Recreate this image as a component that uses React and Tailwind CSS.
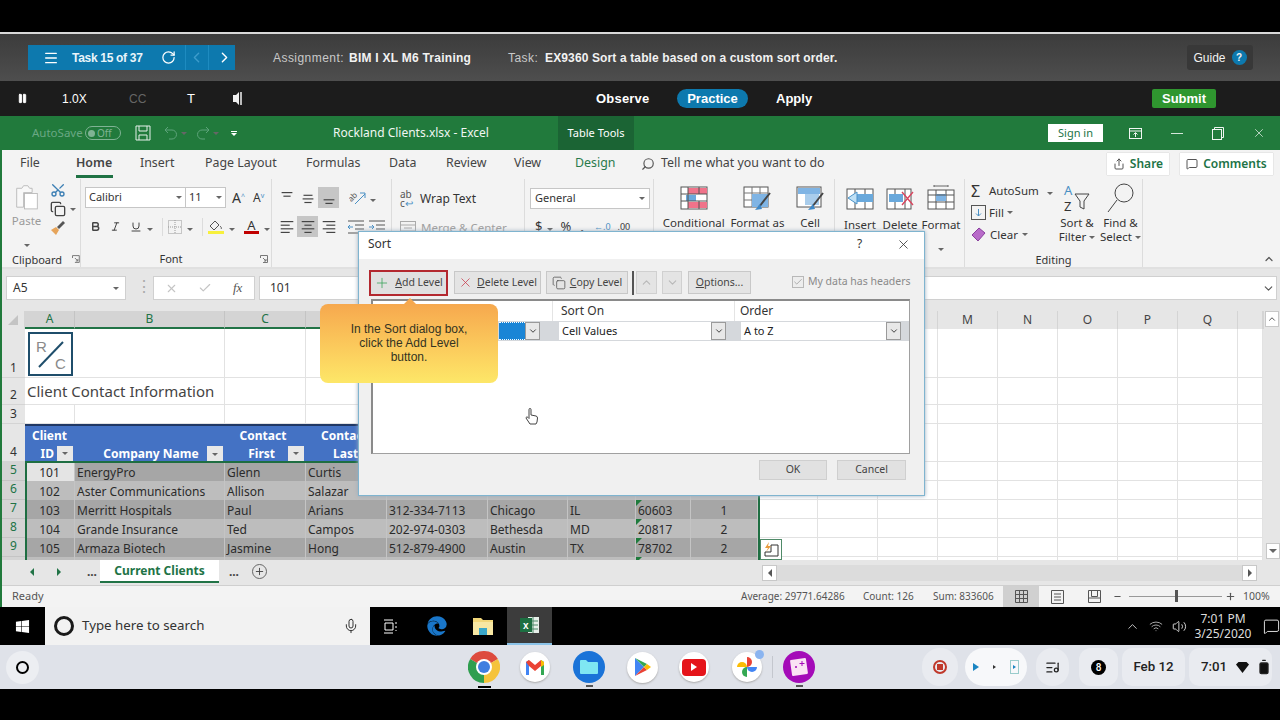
import React from "react";
import { FaEdge, FaWindows } from "react-icons/fa";
import { ChevronLeft, ChevronRight, Menu, RotateCw, Pause, ChevronUp, Search, X, Plus, Minus, Copy, Check, ChevronDown, Mic, Volume2, Wifi, ListMusic, BatteryFull, MessageSquare, Share, Scissors, Bold, Italic, Underline } from "lucide-react";

const Caret = () => <span className="inline-block w-0 h-0 shrink-0 border-x-[3px] border-x-transparent border-t-[3px] border-t-[#666666]" />;

const Lines = ({ kind, sel }) => {
  const lines = {
    top: [[4, 16, 4], [6, 14, 8]],
    mid: [[5, 15, 7], [4, 16, 11], [6, 14, 15]],
    bot: [[4, 16, 12], [6, 14, 16]],
    l: [[3, 17, 4], [3, 13, 8], [3, 17, 12], [3, 13, 16]],
    c: [[3, 17, 4], [6, 14, 8], [3, 17, 12], [6, 14, 16]],
    r: [[3, 17, 4], [7, 17, 8], [3, 17, 12], [7, 17, 16]],
  }[kind];
  return (
    <span className={sel ? "w-[21px] h-[21px] flex items-center justify-center bg-[#c6c6c6]" : "w-[21px] h-[21px] flex items-center justify-center"}>
      <svg width="18" height="18" viewBox="0 0 20 20" stroke="#444444" strokeWidth="1.3">
        {lines.map((l, i) => <line key={i} x1={l[0]} x2={l[1]} y1={l[2]} y2={l[2]} />)}
      </svg>
    </span>
  );
};

const TableIcon = ({ kind }) => (
  <svg width="30" height="26" viewBox="0 0 30 26" fill="none">
    {kind === "cond" && <><rect x="2" y="2" width="26" height="22" fill="#fff" stroke="#555" /><rect x="9" y="3" width="19" height="6" fill="#f0738a" /><rect x="9" y="17" width="19" height="6" fill="#f0738a" /><rect x="7" y="10" width="10" height="6" fill="#6aa9dc" /><path d="M9 2v22M20 2v7M2 9h26M2 16h26M20 16v8" stroke="#555" /></>}
    {kind === "table" && <><rect x="2" y="2" width="24" height="20" fill="#fff" stroke="#555" /><path d="M10 2v20M18 2v20M2 8h24M2 15h24" stroke="#777" /><rect x="10" y="9" width="16" height="13" fill="#7fb4e4" /><path d="M28 8 L17 22" stroke="#444" strokeWidth="2" /><path d="M18 19 L13 25 L20 24Z" fill="#3f89c8" /></>}
    {kind === "cell" && <><rect x="2" y="2" width="24" height="20" fill="#fff" stroke="#555" /><rect x="3" y="3" width="22" height="6" fill="#7fb4e4" /><rect x="10" y="9" width="14" height="11" fill="#a9cdec" /><path d="M28 8 L17 22" stroke="#444" strokeWidth="2" /><path d="M18 19 L13 25 L20 24Z" fill="#3f89c8" /></>}
    {kind === "insert" && <><rect x="2" y="4" width="26" height="20" fill="#fff" stroke="#555" /><path d="M10 4v20M20 4v20" stroke="#555" /><rect x="8" y="9" width="20" height="8" fill="#6aa9dc" /><path d="M12 7 L3 13 L12 19Z" fill="#bfe0f5" stroke="#4c93c9" /></>}
    {kind === "delete" && <><rect x="2" y="4" width="24" height="20" fill="#fff" stroke="#555" /><path d="M10 4v20M20 4v20" stroke="#555" /><rect x="4" y="9" width="14" height="8" fill="#6aa9dc" /><path d="M17 7 L28 20M28 7 L17 20" stroke="#d9455f" strokeWidth="1.4" /></>}
    {kind === "format" && <><path d="M8 1h14M8 0v2M22 0v2" stroke="#666" /><rect x="2" y="5" width="26" height="19" fill="#fff" stroke="#555" /><path d="M10 5v19M20 5v19" stroke="#555" /><rect x="10" y="9" width="10" height="7" fill="#7fb4e4" /><path d="M2 10h26M2 17h26" stroke="#555" /></>}
  </svg>
);

const cols = ["", "A", "B", "C", "D", "E", "F", "G", "H", "I", "J", "K", "L", "M", "N", "O", "P", "Q", ""];
const data = [
  [5, "101", "EnergyPro", "Glenn", "Curtis", "", "", "", "", ""],
  [6, "102", "Aster Communications", "Allison", "Salazar", "", "", "", "", ""],
  [7, "103", "Merritt Hospitals", "Paul", "Arians", "312-334-7113", "Chicago", "IL", "60603", "1"],
  [8, "104", "Grande Insurance", "Ted", "Campos", "202-974-0303", "Bethesda", "MD", "20817", "2"],
  [9, "105", "Armaza Biotech", "Jasmine", "Hong", "512-879-4900", "Austin", "TX", "78702", "2"],
  [10, "", "", "", "", "", "", "", "", ""],
];

const Blank = ({ n }) => Array.from({ length: n }).map((_, i) => <div key={i} className="bg-white border-r border-b border-[#e2e2e2]" />);

const RowHead = ({ children, active }) => (
  <div className={active ? "bg-[#d4d4d4] border-b border-[#c4c4c4] text-[#217346] flex items-start justify-center text-[12px] leading-[16px]" : "bg-[#e6e6e6] border-b border-[#d4d4d4] text-[#333333] flex items-end justify-center text-[12px] leading-[18px]"}>{children}</div>
);

const Filter = () => (
  <span className="w-[16px] h-[16px] shrink-0 bg-[#e8e8e8] flex items-center justify-center"><Caret /></span>
);

const Shelf = ({ children, cls }) => <span className={"flex items-center justify-center " + cls}>{children}</span>;

export default function App() {
  return (
    <div className="relative w-[1280px] h-[720px] overflow-hidden bg-black font-['Noto_Sans',sans-serif] text-[#333333]">
      <div className="h-[32px] bg-black" />
      <div className="h-[2px] bg-[#d9d9d9]" />

      {/* task bar */}
      <div className="h-[47px] flex items-center bg-gradient-to-b from-[#3c3c3c] to-[#4e4e4e] pl-[28px] font-['Liberation_Sans',sans-serif] text-[12px] text-white">
        <div className="w-[207px] h-[25px] bg-[#0d79ae] flex items-center shrink-0">
          <Menu size={16} className="ml-[15px] w-[16px]" />
          <span className="ml-[13px] w-[81px] font-bold text-[#e8f4fa] tracking-[-0.3px]">Task 15 of 37</span>
          <RotateCw size={15} className="ml-[8px]" />
          <span className="ml-[9px] w-px h-[25px] bg-[#1e8bc0]" />
          <ChevronLeft size={17} className="ml-[2px] text-[#3d9ccb]" />
          <span className="ml-[3px] w-px h-[25px] bg-[#1e8bc0]" />
          <ChevronRight size={17} className="ml-[7px]" />
        </div>
        <span className="ml-[38px] w-[76px] text-[#c9c9c9] tracking-[0.45px]">Assignment:</span>
        <span className="w-[159px] font-bold text-[#f2f2f2] tracking-[0.25px]">BIM I XL M6 Training</span>
        <span className="w-[37px] text-[#c9c9c9] tracking-[0.45px]">Task:</span>
        <span className="w-[642px] font-bold text-[#f2f2f2] tracking-[0.13px]">EX9360 Sort a table based on a custom sort order.</span>
        <div className="w-[66px] h-[25px] bg-[#383838] rounded-[3px] flex items-center justify-center gap-[6px] text-[#f2f2f2]">
          <span>Guide</span>
          <span className="w-[15px] h-[15px] rounded-full bg-[#0d79ae] flex items-center justify-center text-[10px] font-bold">?</span>
        </div>
      </div>

      {/* mode bar */}
      <div className="h-[35px] flex items-center bg-[#1c1c1c] font-['Liberation_Sans',sans-serif] text-white text-[12px]">
        <span className="w-[62px] pl-[17px]"><Pause size={11} fill="white" /></span>
        <span className="w-[67px]">1.0X</span>
        <span className="w-[58px] text-[#666666]">CC</span>
        <span className="w-[46px] text-[13px]">T</span>
        <span className="w-[363px] flex"><svg width="10" height="15" viewBox="0 0 10 15"><path d="M0 4h3l3-3v13l-3-3H0z" fill="#f0f0f0" /><path d="M8 1v13" stroke="#f0f0f0" strokeWidth="1.5" /></svg></span>
        <span className="w-[81px] text-[13px] font-bold tracking-[0.2px]">Observe</span>
        <span className="w-[71px] h-[19px] rounded-full bg-[#0d79ae] flex items-center justify-center text-[13px] font-bold">Practice</span>
        <span className="w-[28px]" />
        <span className="w-[376px] text-[13px] font-bold">Apply</span>
        <span className="w-[64px] h-[19px] bg-[#2f962f] rounded-[2px] flex items-center justify-center text-[13px] font-bold">Submit</span>
      </div>

      {/* excel title */}
      <div className="h-[34px] flex items-center bg-[#217a3c] text-white text-[12px]">
        <span className="w-[32px]" />
        <span className="w-[53px] text-[11.5px] text-[#6aa884]">AutoSave</span>
        <span className="w-[36px] h-[14px] rounded-full border border-[#7fb394] flex items-center px-[2px] gap-[2px] text-[10px] text-[#7fb394]"><span className="w-[7px] h-[7px] rounded-full bg-[#7fb394]" />Off</span>
        <span className="w-[14px]" />
        <svg width="16" height="16" viewBox="0 0 16 16" fill="none" stroke="#e6f0ea" strokeWidth="1"><path d="M1 1h14v14H1zM4 1v5h8V1M4 15v-5h8v5" /></svg>
        <span className="ml-[12px] flex items-center gap-[2px] text-[#5da37a]">
          <svg width="16" height="16" viewBox="0 0 16 16" fill="none" stroke="currentColor"><path d="M5 2L2 5l3 3M2 5h7a4 4 0 010 9H6" /></svg><Caret />
          <svg className="ml-[6px]" width="16" height="16" viewBox="0 0 16 16" fill="none" stroke="currentColor"><path d="M11 2l3 3-3 3M14 5H7a4 4 0 000 9h3" /></svg><Caret />
        </span>
        <span className="ml-[12px] flex flex-col items-center gap-[1px]"><span className="w-[6px] h-px bg-white" /><span className="w-0 h-0 border-x-[3px] border-x-transparent border-t-[3px] border-t-white" /></span>
        <span className="ml-[96px] w-[225px] text-[12px] text-[#f0f6f2]">Rockland Clients.xlsx - Excel</span>
        <span className="w-[76px] h-[34px] bg-[#1b6434] text-[11px] flex items-center justify-center">Table Tools</span>
        <span className="w-[414px]" />
        <span className="w-[55px] h-[18px] bg-white text-[#217346] text-[11px] flex items-center justify-center">Sign in</span>
        <span className="w-[26px]" />
        <svg width="13" height="11" viewBox="0 0 13 11" fill="none" stroke="#f0f6f2"><rect x="0.5" y="0.5" width="12" height="10" /><path d="M0.5 3h12M6.5 9V5M4.5 6.5l2-2 2 2" /></svg>
        <span className="ml-[29px] w-[12px] h-px bg-[#d4e6da]" />
        <svg className="ml-[29px]" width="12" height="13" viewBox="0 0 12 13" fill="none" stroke="#f0f6f2"><rect x="0.5" y="2.5" width="9" height="10" /><path d="M2.5 2.5V.5h9v10h-2" /></svg>
        <X size={14} strokeWidth={1.2} className="ml-[28px] text-[#f0f6f2]" />
      </div>

      {/* excel body */}
      <div className="h-[457px] border-l-2 border-[#217a3c] bg-[#f3f3f3] relative">
        {/* tabs */}
        <div className="h-[29px] flex items-center pb-[2px] text-[12.4px] text-[#444444] whitespace-nowrap">
          <span className="w-[74px] pl-[18px]">File</span>
          <span className="w-[64px] font-semibold relative h-[27px] flex items-center"><span>Home</span><span className="absolute left-0 top-[25px] w-[37px] h-[3px] bg-[#1f7244]" /></span>
          <span className="w-[65px]">Insert</span>
          <span className="w-[101px]">Page Layout</span>
          <span className="w-[83px]">Formulas</span>
          <span className="w-[57px]">Data</span>
          <span className="w-[68px]">Review</span>
          <span className="w-[61px]">View</span>
          <span className="w-[66px] text-[#2a7a4c]">Design</span>
          <span className="w-[20px]"><Search size={14} className="scale-x-[-1] text-[#555555]" /></span>
          <span className="w-[446px]">Tell me what you want to do</span>
          <span className="w-[62px] h-[22px] bg-white flex items-center justify-center gap-[5px] text-[#217346] font-semibold text-[12px] shadow-[0_0_1px_#aaaaaa]"><Share size={12} className="text-[#555555]" />Share</span>
          <span className="w-[11px]" />
          <span className="w-[93px] h-[22px] bg-white flex items-center justify-center gap-[5px] text-[#217346] font-semibold text-[12px] shadow-[0_0_1px_#aaaaaa]"><MessageSquare size={12} className="text-[#555555]" />Comments</span>
        </div>

        {/* ribbon */}
        <div className="h-[90px] flex text-[11.5px] border-b-2 border-[#e0e0e0]">
          {/* clipboard */}
          <div className="w-[79px] border-r border-[#dcdcdc] flex flex-col">
            <div className="h-[72px] flex">
              <div className="w-[46px] flex flex-col items-center pl-[3px] pt-[5px] text-[#9a9a9a]">
                <svg width="28" height="30" viewBox="0 0 28 30" fill="none" stroke="#b5b5b5"><path d="M2 5h6l2-3h5l2 3h3v5H10v17H2z" fill="#f8f8f8" /><rect x="11" y="11" width="15" height="18" fill="#ffffff" /></svg>
                <span className="mt-[4px] leading-[14px]">Paste</span>
                <span className="mt-[6px]"><Caret /></span>
              </div>
              <div className="flex flex-col gap-[3px] pt-[3px] pl-[2px]">
                <Scissors size={16} className="text-[#3c7fb4] rotate-[-90deg]" />
                <span className="flex items-center gap-[4px]"><Copy size={16} className="text-[#444444]" /><Caret /></span>
                <svg width="16" height="16" viewBox="0 0 16 16"><path d="M7 7l6-6 2 2-6 6z" fill="#555555" /><path d="M1 10l5-3 3 3-3 5z" fill="#e6a45a" /></svg>
              </div>
            </div>
            <div className="h-[17px] flex items-center pl-[10px] text-[11px] leading-none">
              <span className="w-[62px]">Clipboard</span>
              <svg width="8" height="8" viewBox="0 0 8 8" fill="none" stroke="#777"><path d="M.5 3V.5h7v7H3M3 3l3 3M6 4v2H4" /></svg>
            </div>
          </div>

          {/* font */}
          <div className="w-[191px] border-r border-[#dcdcdc] flex flex-col">
            <div className="h-[72px] pl-[4px] pt-[8px] flex flex-col">
              <div className="flex items-center h-[21px]">
                <span className="w-[101px] h-[21px] bg-white border border-[#c6c6c6] flex items-center justify-between px-[3px] text-[11px]">Calibri<Caret /></span>
                <span className="w-[40px] h-[21px] bg-white border border-l-0 border-[#c6c6c6] flex items-center justify-between px-[3px] text-[11px]">11<Caret /></span>
                <span className="ml-[6px] text-[14px] leading-none">A<sup className="text-[7px] text-[#4a90c4]">^</sup></span>
                <span className="ml-[8px] text-[12px] leading-none">A<sup className="text-[7px] text-[#4a90c4]">v</sup></span>
              </div>
              <div className="flex items-center h-[21px] mt-[8px] pl-[5px]">
                <Bold size={11} strokeWidth={3.2} className="text-[#444444]" />
                <Italic size={11} className="ml-[9px]" />
                <Underline size={12} className="ml-[9px] text-[#444444]" />
                <span className="ml-[5px]"><Caret /></span>
                <span className="ml-[9px] w-px h-[18px] bg-[#dcdcdc]" />
                <svg className="ml-[5px]" width="14" height="14" viewBox="0 0 14 14" fill="none" stroke="#999" strokeDasharray="1 1"><rect x="0.5" y="0.5" width="13" height="13" /><path d="M7 0v14M0 7h14" /></svg>
                <span className="ml-[5px]"><Caret /></span>
                <span className="ml-[9px] w-px h-[18px] bg-[#dcdcdc]" />
                <span className="ml-[5px] flex flex-col items-center"><svg width="14" height="11" viewBox="0 0 14 11" fill="none" stroke="#555"><path d="M6 1L1 6l4 4 5-5zM11 6c1 1 2 2 1 3" /></svg><span className="w-[16px] h-[3px] bg-[#f7f03c]" /></span>
                <span className="ml-[5px]"><Caret /></span>
                <span className="ml-[9px] flex flex-col items-center text-[13px] leading-[11px]">A<span className="w-[15px] h-[3px] bg-[#c00000]" /></span>
                <span className="ml-[5px]"><Caret /></span>
              </div>
            </div>
            <div className="h-[17px] flex items-center text-[11px] leading-none relative">
              <span className="w-full text-center pr-[10px]">Font</span>
              <svg className="absolute right-[3px]" width="8" height="8" viewBox="0 0 8 8" fill="none" stroke="#777"><path d="M.5 3V.5h7v7H3M3 3l3 3M6 4v2H4" /></svg>
            </div>
          </div>

          {/* alignment */}
          <div className="w-[253px] border-r border-[#dcdcdc] flex">
            <div className="w-[120px] border-r border-[#dcdcdc] h-[66px] pl-[4px] pt-[8px] flex flex-col gap-[8px]">
              <div className="flex items-center">
                <Lines kind="top" /><Lines kind="mid" /><Lines kind="bot" sel />
                <svg className="ml-[10px]" width="18" height="16" viewBox="0 0 18 16" fill="none" stroke="#4a90c4"><text x="0" y="9" fontSize="8" fill="#555" stroke="none" transform="rotate(-45 5 8)">ab</text><path d="M6 14L16 4M11 3h5v5" /></svg>
                <span className="ml-[3px]"><Caret /></span>
              </div>
              <div className="flex items-center">
                <Lines kind="l" /><Lines kind="c" sel /><Lines kind="r" />
                <svg className="ml-[8px]" width="18" height="14" viewBox="0 0 18 14" fill="none" stroke="#555"><path d="M1 1h16M8 5h9M8 9h9M1 13h16" /><path d="M6 7H1M3 5L1 7l2 2" stroke="#4a90c4" /></svg>
                <svg className="ml-[3px]" width="18" height="14" viewBox="0 0 18 14" fill="none" stroke="#555"><path d="M1 1h16M8 5h9M8 9h9M1 13h16" /><path d="M1 7h5M4 5l2 2-2 2" stroke="#4a90c4" /></svg>
              </div>
            </div>
            <div className="pl-[8px] pt-[9px] flex flex-col gap-[10px]">
              <div className="flex items-center gap-[4px] h-[21px]"><span className="text-[10px] leading-[9px] w-[15px] text-[#555555]">ab<br />c<span className="text-[#4a90c4]">↩</span></span><span className="ml-[1px] text-[12px]">Wrap Text</span></div>
              <div className="flex items-center gap-[5px] text-[#a0a0a0] whitespace-nowrap"><svg width="16" height="14" viewBox="0 0 16 14" fill="none" stroke="#aaaaaa"><rect x="0.5" y="0.5" width="15" height="13" /><path d="M0 4h16M0 10h16M4 7h8" /></svg>Merge &amp; Center</div>
            </div>
          </div>

          {/* number */}
          <div className="w-[129px] border-r border-[#dcdcdc] pl-[5px] pt-[9px] flex flex-col">
            <span className="w-[120px] h-[21px] bg-white border border-[#c6c6c6] flex items-center justify-between px-[4px] text-[11px]">General<Caret /></span>
            <div className="flex items-center mt-[11px] text-[13px] leading-none">
              <span className="ml-[5px]">$</span><span className="ml-[5px]"><Caret /></span>
              <span className="ml-[7px]">%</span><span className="ml-[9px] font-bold">,</span>
              <span className="ml-[10px] text-[9px] text-[#4a90c4]">←.0</span><span className="ml-[7px] text-[9px]">.00</span>
            </div>
          </div>

          {/* styles */}
          <div className="w-[181px] border-r border-[#dcdcdc] flex pt-[6px] text-center">
            <div className="w-[78px] flex flex-col items-center pl-[2px]"><TableIcon kind="cond" /><span className="mt-[5px] leading-[14px]">Conditional</span></div>
            <div className="w-[52px] flex flex-col items-center"><TableIcon kind="table" /><span className="mt-[5px] leading-[14px] whitespace-nowrap">Format as</span></div>
            <div className="w-[51px] pl-[3px] flex flex-col items-center"><TableIcon kind="cell" /><span className="mt-[5px] leading-[14px]">Cell</span></div>
          </div>

          {/* cells */}
          <div className="w-[130px] border-r border-[#dcdcdc] flex pt-[6px] text-center">
            <div className="w-[46px] flex flex-col items-center pl-[4px]"><TableIcon kind="insert" /><span className="mt-[7px] leading-[14px]">Insert</span></div>
            <div className="w-[38px] flex flex-col items-center"><TableIcon kind="delete" /><span className="mt-[7px] leading-[14px]">Delete</span></div>
            <div className="w-[44px] flex flex-col items-center"><TableIcon kind="format" /><span className="mt-[7px] leading-[14px]">Format</span><span className="mt-[6px]"><Caret /></span></div>
          </div>

          {/* editing */}
          <div className="w-[178px] border-r border-[#dcdcdc] flex flex-col">
            <div className="h-[72px] flex">
              <div className="w-[90px] pl-[6px] pt-[2px] flex flex-col gap-[3px] whitespace-nowrap">
                <span className="flex items-center gap-[5px] h-[19px]"><span className="text-[16px] w-[13px] leading-none">Σ</span>AutoSum<span className="ml-[3px]"><Caret /></span></span>
                <span className="flex items-center gap-[3px] h-[19px]"><svg width="15" height="15" viewBox="0 0 15 15" fill="none" stroke="#555"><rect x="0.5" y="0.5" width="14" height="14" /><path d="M7.5 4v7M5 8.5l2.5 2.5L10 8.5" stroke="#4a90c4" /></svg>Fill<Caret /></span>
                <span className="flex items-center gap-[4px] h-[19px]"><svg width="15" height="15" viewBox="0 0 15 15"><path d="M1 8l7-7 6 5-7 8z" fill="#b86bc9" stroke="#8a3f9e" /></svg>Clear<Caret /></span>
              </div>
              <div className="w-[44px] flex flex-col items-center pt-[3px] text-center leading-[14px]">
                <svg width="30" height="32" viewBox="0 0 30 32" fill="none"><text x="2" y="13" fontSize="13" fill="#4a90c4">A</text><text x="2" y="29" fontSize="13" fill="#333">Z</text><path d="M13 12h14l-5 7v8l-4-2v-6z" stroke="#444" /></svg>
                <span className="mt-[2px] whitespace-nowrap">Sort &amp;</span>
                <span className="flex items-center gap-[3px] whitespace-nowrap">Filter<Caret /></span>
              </div>
              <div className="w-[43px] flex flex-col items-center pt-[3px] text-center leading-[14px]">
                <svg width="30" height="32" viewBox="0 0 30 32" fill="none" stroke="#444"><circle cx="18" cy="11" r="9" /><path d="M11 18L2 30" /></svg>
                <span className="mt-[2px] whitespace-nowrap">Find &amp;</span>
                <span className="flex items-center gap-[3px] whitespace-nowrap">Select<Caret /></span>
              </div>
            </div>
            <div className="h-[16px] flex items-center justify-center text-[11px] leading-none">Editing</div>
          </div>
          <div className="flex-1 flex items-end justify-end pr-[5px] pb-[2px]"><ChevronUp size={12} strokeWidth={2.4} className="text-[#555555]" /></div>
        </div>

        {/* formula bar */}
        <div className="h-[39px] bg-[#e6e6e6] flex items-start pt-[7px]">
          <span className="ml-[4px] w-[120px] h-[24px] bg-white border border-[#d0d0d0] flex items-center justify-between px-[6px] text-[12px]">A5<Caret /></span>
          <span className="ml-[9px] w-[18px] text-center text-[#aaaaaa] leading-[20px]">⋮</span>
          <span className="w-[102px] ml-[0px] h-[24px] bg-white border border-[#d0d0d0] flex items-center pl-[11px] text-[#c4c4c4]">
            <X size={13} /><Check size={14} className="ml-[20px]" /><span className="ml-[21px] italic font-['Liberation_Serif',serif] text-[13px] text-[#555555]">fx</span>
          </span>
          <span className="ml-[4px] flex-1 mr-[3px] h-[24px] bg-white border border-[#d0d0d0] flex items-center justify-between pl-[10px] pr-[1px] text-[12px]">101<ChevronDown size={13} className="text-[#555555]" /></span>
        </div>

        {/* sheet */}
        <div className="h-[252px] relative overflow-hidden bg-[#e6e6e6] pt-[3px] text-[12px]">
          <div className="grid grid-cols-[23px_50px_150px_81px_81px_101px_80px_68px_55px_67px_repeat(8,60px)_25px_17px] grid-rows-[18px_49px_27px_19px_38px_19px_19px_19px_19px_19px_19px]">
            {cols.map((c, i) => (
              <div key={i} className={i > 0 && i < 10 ? "bg-[#d4d4d4] border-r border-[#c4c4c4] border-b-2 border-b-[#217346] text-[#217346] flex items-center justify-center" : "bg-[#e6e6e6] border-r border-[#d4d4d4] flex items-center justify-center text-[#444444]"}>
                {i === 0 ? <span className="w-0 h-0 border-l-[10px] border-l-transparent border-b-[10px] border-b-[#c4c4c4]" /> : c}
              </div>
            ))}
            <div className="bg-[#e6e6e6] flex items-start justify-center pt-0 border-l border-[#d4d4d4]"><span className="w-[14px] h-[16px] bg-white border border-[#c8c8c8] flex items-center justify-center"><ChevronUp size={10} /></span></div>

            {/* row 1 */}
            <RowHead>1</RowHead>
            <div className="col-span-2 bg-white border-r border-b border-[#e2e2e2] pl-[3px] pt-[3px]">
              <span className="block relative w-[45px] h-[44px] border-2 border-[#1f4e6b] font-['Liberation_Sans',sans-serif] text-[#8a8a8a] text-[15px] leading-none bg-white">
                <span className="absolute left-[6px] top-[5px]">R</span>
                <span className="absolute left-[25px] top-[22px]">C</span>
                <svg className="absolute left-[7px] top-[6px]" width="28" height="28" viewBox="0 0 28 28"><path d="M2 27L26 2" stroke="#1f4e6b" strokeWidth="2" /></svg>
              </span>
            </div>
            <Blank n={16} /><div className="bg-[#e6e6e6]" />

            {/* row 2 */}
            <RowHead>2</RowHead>
            <div className="col-span-2 bg-white border-r border-b border-[#e2e2e2] pl-[2px] text-[15px] leading-[26px] whitespace-nowrap text-[#444444]">Client Contact Information</div>
            <Blank n={16} /><div className="bg-[#e6e6e6]" />

            {/* row 3 */}
            <RowHead>3</RowHead>
            <Blank n={18} /><div className="bg-[#e6e6e6]" />

            {/* row 4 */}
            <RowHead>4</RowHead>
            <div className="bg-[#4472c4] border-t-2 border-[#203864] text-white font-bold leading-[17px] flex flex-col items-center justify-end relative pl-[2px]">
              <span className="pr-[3px] mb-[1px]">Client</span>
              <span className="flex items-center gap-[3px] w-full justify-end pr-[2px]">ID<Filter /></span>
            </div>
            <div className="bg-[#4472c4] border-t-2 border-[#203864] text-white font-bold flex items-end pr-[2px]">
              <span className="flex-1 text-center pl-[20px] -mb-[1px]">Company Name</span><Filter />
            </div>
            <div className="bg-[#4472c4] border-t-2 border-[#203864] text-white font-bold leading-[17px] flex flex-col items-center justify-end pr-[2px]">
              <span className="pr-[3px] mb-[1px]">Contact</span>
              <span className="flex items-center gap-[13px] w-full justify-end">First<Filter /></span>
            </div>
            <div className="bg-[#4472c4] border-t-2 border-[#203864] text-white font-bold leading-[17px] flex flex-col items-start justify-end pl-[15px] whitespace-nowrap">
              <span className="mb-[1px]">Contact</span>
              <span className="pl-[12px]">Last</span>
            </div>
            {Array.from({ length: 5 }).map((_, i) => <div key={i} className="bg-[#4472c4] border-t-2 border-[#203864]" />)}
            <Blank n={9} /><div className="bg-[#e6e6e6]" />

            {/* rows */}
            {data.map((r, ri) => (
              <React.Fragment key={ri}>
                <RowHead active>{r[0]}</RowHead>
                {r.slice(1).map((v, i) => (
                  <div key={i} className={(i === 0 && ri === 0 ? "bg-[#e4e4e4] " : ri % 2 === 0 ? "bg-[#a6a6a6] " : "bg-[#bdbdbd] ") + (i === 0 || i === 8 ? "text-center " : "pl-[2px] ") + "relative border-r border-[#c4c4c4] leading-[21px] text-[#2b2b2b] whitespace-nowrap"}>
                    {i === 7 && <span className="absolute left-0 top-0 w-0 h-0 border-t-[6px] border-t-[#1e7b3c] border-r-[6px] border-r-transparent" />}
                    {v}
                  </div>
                ))}
                <Blank n={9} /><div className="bg-[#e6e6e6]" />
              </React.Fragment>
            ))}
          </div>
          {/* v scrollbar down button over the grid */}
          <span className="absolute right-0 top-[235px] w-[14px] h-[16px] bg-white border border-[#c8c8c8] flex items-center justify-center"><span className="w-0 h-0 border-x-[4px] border-x-transparent border-t-[4px] border-t-[#666666]" /></span>
          {/* selection outline */}
          <span className="absolute left-[23px] top-[153px] w-[735px] h-[120px] border-2 border-[#1e6e42] pointer-events-none" />
          {/* quick analysis */}
          <span className="absolute left-[758px] top-[231px] w-[22px] h-[21px] bg-white border border-[#4f8a68] flex items-center justify-center">
            <svg width="15" height="15" viewBox="0 0 15 15" fill="none" stroke="#333"><path d="M7 3h7v11H1v-4h6z" /><path d="M5 0L1 6h3L2 10l5-6H4z" fill="#e89a3c" stroke="none" /></svg>
          </span>
        </div>

        {/* sheet tabs */}
        <div className="h-[25px] flex items-start bg-[#e6e6e6] text-[#444444] text-[12px]">
          <span className="w-[32px] h-[24px] flex items-center justify-end"><span className="w-0 h-0 border-y-[4px] border-y-transparent border-r-[4px] border-r-[#217346]" /></span>
          <span className="w-[27px] h-[24px] flex items-center justify-end"><span className="w-0 h-0 border-y-[4px] border-y-transparent border-l-[4px] border-l-[#217346]" /></span>
          <span className="w-[39px] h-[24px] flex items-center justify-end pr-[3px] font-bold">...</span>
          <span className="w-[119px] h-[23px] bg-white border-b-2 border-[#217346] flex items-center justify-center text-[#217346] font-bold">Current Clients</span>
          <span className="w-[20px] h-[24px] flex items-center justify-end font-bold">...</span>
          <span className="ml-[13px] mt-[4px] w-[15px] h-[15px] rounded-full border border-[#666666] flex items-center justify-center"><Plus size={11} /></span>
          <span className="w-[495px]" />
          <span className="mt-[5px] w-[15px] h-[16px] bg-white border border-[#c8c8c8] flex items-center justify-center"><span className="w-0 h-0 border-y-[4px] border-y-transparent border-r-[4px] border-r-[#555555]" /></span>
          <span className="mt-[5px] w-[465px] h-[16px] bg-[#dcdcdc]" />
          <span className="mt-[5px] w-[15px] h-[16px] bg-white border border-[#c8c8c8] flex items-center justify-center"><span className="w-0 h-0 border-y-[4px] border-y-transparent border-l-[4px] border-l-[#555555]" /></span>
        </div>

        {/* status */}
        <div className="h-[22px] flex items-center bg-[#f3f3f3] border-t border-[#cfcfcf] text-[10px] text-[#555555] whitespace-nowrap">
          <span className="pl-[10px] w-[739px] text-[11px]">Ready</span>
          <span className="w-[122px]">Average: 29771.64286</span>
          <span className="w-[70px]">Count: 126</span>
          <span className="w-[70px]">Sum: 833606</span>
          <span className="w-[36px] h-[21px] bg-[#d0d0d0] flex items-center justify-center"><svg width="13" height="13" viewBox="0 0 13 13" fill="none" stroke="#555"><path d="M.5.5h12v12H.5zM4.5.5v12M8.5.5v12M.5 4.5h12M.5 8.5h12" /></svg></span>
          <span className="w-[36px] flex justify-center"><svg width="13" height="14" viewBox="0 0 13 14" fill="none" stroke="#555"><path d="M.5.5h12v13H.5zM3 4h7M3 7h7M3 10h7" /></svg></span>
          <span className="w-[38px] flex justify-center"><svg width="13" height="13" viewBox="0 0 13 13" fill="none" stroke="#555"><path d="M.5.5h12v12H.5zM3.5.5v6h6V.5M.5 8h12" /></svg></span>
          <Minus size={9} strokeWidth={3} />
          <span className="ml-[7px] w-[93px] h-px bg-[#999999] relative"><span className="absolute left-[46px] top-[-6px] w-[3px] h-[12px] bg-[#555555]" /></span>
          <Plus size={11} strokeWidth={2.5} className="ml-[3px]" />
          <span className="ml-[7px] text-[10.5px]">100%</span>
        </div>
      </div>

      {/* windows taskbar */}
      <div className="h-[38px] bg-black flex items-center text-white">
        <span className="w-[45px] flex justify-center"><FaWindows size={15} /></span>
        <span className="w-[325px] h-[38px] bg-[#f2f2f2] flex items-center text-[#333333] text-[13.3px]">
          <span className="ml-[9px] w-[20px] h-[20px] rounded-full border-[3px] border-[#1a1a1a]" />
          <span className="ml-[8px] w-[261px]">Type here to search</span>
          <Mic size={16} strokeWidth={1.5} />
        </span>
        <span className="w-[41px] flex justify-center"><svg width="15" height="15" viewBox="0 0 15 15" fill="none" stroke="#fff"><path d="M1 1h9M1 14h9M2 4h8v7H2zM13 3v2M13 7v2M13 11v1" /></svg></span>
        <span className="w-[52px] flex justify-center"><FaEdge size={20} className="text-[#1976c9]" /></span>
        <span className="w-[40px] mr-[4px] flex justify-center"><svg width="20" height="18" viewBox="0 0 20 18"><path d="M0 1h8l2 2h10v15H0z" fill="#f2d77a" /><path d="M0 5h20v13H0z" fill="#f7e7a3" /><rect x="6" y="11" width="8" height="7" fill="#3aa7c9" /></svg></span>
        <span className="w-[45px] h-[38px] bg-[#3c3c3c] border-b-2 border-[#8bc3e8] flex items-center justify-center"><svg width="20" height="18" viewBox="0 0 20 18"><rect x="8" y="1" width="11" height="16" fill="#e6efe9" /><path d="M10 5h8M10 9h8M10 13h8M13 1v16" stroke="#4d8a68" /><rect x="0" y="2" width="12" height="14" fill="#1d6f42" /><text x="3" y="13" fontSize="10" fill="#fff" fontFamily="Liberation Sans" fontWeight="bold">x</text></svg></span>
        <span className="w-[568px]" />
        <span className="w-[24px] flex justify-center"><ChevronUp size={15} strokeWidth={1.2} /></span>
        <span className="w-[24px] flex justify-center"><Wifi size={14} strokeWidth={1.5} className="text-[#bbbbbb]" /></span>
        <span className="w-[22px] flex justify-center"><Volume2 size={15} strokeWidth={1.3} /></span>
        <span className="w-[66px] flex flex-col items-center text-[12px] leading-[15px] text-[#dddddd]"><span>7:01 PM</span><span>3/25/2020</span></span>
        <span className="ml-[7px]"><MessageSquare size={17} strokeWidth={1.2} /></span>
      </div>

      {/* chrome shelf */}
      <div className="h-[44px] bg-[#dfe2e9] flex items-center font-['Roboto',sans-serif] text-[13.3px] font-medium text-[#222222]">
        <Shelf cls="ml-[6px] w-[33px] h-[33px] rounded-full bg-[#eceef2]"><span className="w-[13px] h-[13px] rounded-full border-2 border-black" /></Shelf>
        <span className="ml-[429px] w-[32px] flex flex-col items-center relative">
          <svg width="32" height="32" viewBox="0 0 32 32"><path d="M16 16L2.14 8A16 16 0 0129.86 8Z" fill="#dd4b3e" /><path d="M16 16L29.86 8A16 16 0 0116 32Z" fill="#f5c33b" /><path d="M16 16L16 32A16 16 0 012.14 8Z" fill="#2f9e4f" /><circle cx="16" cy="16" r="8" fill="#fff" /><circle cx="16" cy="16" r="6" fill="#3f7ee0" /></svg>
          <span className="absolute top-[35px] w-[13px] h-[2px] bg-black" />
        </span>
        <Shelf cls="ml-[20px] w-[30px] h-[30px] rounded-full bg-white shadow-[0_1px_2px_#aaaaaa]">
          <svg width="20" height="16" viewBox="0 0 20 16"><path d="M1 16V3l3-2v15z" fill="#4285f4" /><path d="M16 16V1l3 2v13z" fill="#34a853" /><path d="M1 3l3-2 6 5 6-5v6l-6 5-6-5z" fill="#ea4335" /><path d="M16 1l3 2v3l-3 2z" fill="#fbbc04" /></svg>
        </Shelf>
        <Shelf cls="ml-[23px] w-[32px] h-[32px] rounded-full bg-[#1a73d8] relative">
          <svg width="20" height="16" viewBox="0 0 20 16"><path d="M1 2a1 1 0 011-1h5l2 2h9a1 1 0 011 1v10a1 1 0 01-1 1H2a1 1 0 01-1-1z" fill="#7fe7f2" /></svg>
          <span className="absolute top-[34px] w-[7px] h-[2px] bg-[#555555]" />
        </Shelf>
        <Shelf cls="ml-[22px] w-[31px] h-[31px] rounded-full bg-white shadow-[0_1px_2px_#aaaaaa]">
          <svg width="18" height="20" viewBox="0 0 18 20"><path d="M1 1l9 9-9 9z" fill="#4285f4" /><path d="M1 1l12 6-3 3z" fill="#34a853" /><path d="M1 19l12-6-3-3z" fill="#ea4335" /><path d="M13 7l4 3-4 3-3-3z" fill="#fbbc04" /></svg>
        </Shelf>
        <Shelf cls="ml-[21px] w-[30px] h-[30px] rounded-full bg-white shadow-[0_1px_2px_#aaaaaa]">
          <span className="w-[24px] h-[17px] rounded-[4px] bg-[#e5141a] flex items-center justify-center"><span className="w-0 h-0 border-y-[4px] border-y-transparent border-l-[6px] border-l-white" /></span>
        </Shelf>
        <Shelf cls="ml-[23px] w-[30px] h-[30px] rounded-full bg-white shadow-[0_1px_2px_#aaaaaa] relative">
          <svg width="24" height="24" viewBox="0 0 24 24"><path d="M12 12V2a5 5 0 015 5 5 5 0 01-5 5z" fill="#ea4335" /><path d="M12 12h10a5 5 0 01-5 5 5 5 0 01-5-5z" fill="#4285f4" /><path d="M12 12v10a5 5 0 01-5-5 5 5 0 015-5z" fill="#34a853" /><path d="M12 12H2a5 5 0 015-5 5 5 0 015 5z" fill="#fbbc04" /></svg>
          <span className="absolute right-[-2px] top-[-2px] w-[9px] h-[9px] rounded-full bg-[#8ab4f0]" />
        </Shelf>
        <span className="ml-[10px] w-px h-[22px] bg-[#c4c7ce]" />
        <Shelf cls="ml-[10px] w-[32px] h-[32px] rounded-full bg-[#a40bb8] relative">
          <svg width="20" height="20" viewBox="0 0 20 20"><rect x="2" y="2" width="16" height="16" rx="1" fill="#fbe3f4" transform="rotate(-8 10 10)" /><path d="M13 4v5M10.5 6.5h5M7 9v2M6 10h2" stroke="#a40bb8" /></svg>
          <span className="absolute top-[34px] w-[7px] h-[2px] bg-[#555555]" />
        </Shelf>
        <Shelf cls="ml-[107px] w-[36px] h-[38px] rounded-full bg-[#e9ebf0]"><span className="w-[14px] h-[14px] rounded-full border-2 border-[#c0392b] flex items-center justify-center"><span className="w-[6px] h-[6px] bg-[#c0392b]" /></span></Shelf>
        <Shelf cls="ml-[7px] w-[62px] h-[38px] rounded-full bg-[#f7f8fa] gap-[14px]">
          <span className="w-0 h-0 border-y-[4px] border-y-transparent border-l-[6px] border-l-[#1a85c2]" />
          <span className="w-0 h-0 border-y-[2px] border-y-transparent border-l-[3px] border-l-[#333333]" />
          <span className="w-[9px] h-[14px] border border-[#99cccc] flex items-center justify-center"><span className="w-0 h-0 border-y-[2px] border-y-transparent border-l-[3px] border-l-[#1a85c2]" /></span>
        </Shelf>
        <Shelf cls="ml-[9px] w-[33px] h-[38px] rounded-full bg-[#e9ebf0]"><ListMusic size={15} /></Shelf>
        <Shelf cls="ml-[10px] w-[39px] h-[38px] rounded-[12px] bg-[#e9ebf0]"><span className="w-[15px] h-[15px] rounded-full bg-black text-white text-[10px] flex items-center justify-center">8</span></Shelf>
        <Shelf cls="ml-[4px] w-[63px] h-[38px] rounded-[10px] bg-[#e9ebf0]">Feb 12</Shelf>
        <span className="ml-[4px] w-[83px] h-[38px] rounded-[10px] bg-[#e9ebf0] flex items-center gap-[9px] pl-[12px]">
          7:01
          <svg width="13" height="11" viewBox="0 0 13 11"><path d="M0 2.5L2.5 0h8L13 2.5 6.5 11z" fill="#111" /></svg>
          <BatteryFull size={16} fill="#111" className="rotate-[-90deg] mx-[-2px]" />
        </span>
      </div>

      {/* sort dialog */}
      <div className="absolute left-[358px] top-[231px] w-[567px] h-[265px] border border-[#7fb4cf] bg-[#f0f0f0] text-[10.5px] text-[#444444] flex flex-col shadow-[0_0_4px_#99aabb]">
        <div className="h-[27px] bg-white flex items-center pl-[9px] pb-[3px] text-[12px] text-[#333333]">
          <span className="w-[489px]">Sort</span>
          <span className="w-[39px] text-[12px]">?</span>
          <X size={15} strokeWidth={1.3} />
        </div>
        <div className="h-[40px] flex items-start pt-[12px] pl-[10px] text-[#444444]">
          <span className="w-[79px] h-[26px] -mt-[1px] border-2 border-[#b3282f] bg-[#e0e0e0] flex items-center justify-center gap-[5px]"><Plus size={16} strokeWidth={1.2} className="text-[#3aa35c]" /><span><u>A</u>dd Level</span></span>
          <span className="ml-[6px] w-[87px] h-[23px] bg-[#e4e4e4] border border-[#c8c8c8] flex items-center justify-center gap-[4px]"><X size={15} strokeWidth={1.2} className="text-[#c8384a]" /><span><u>D</u>elete Level</span></span>
          <span className="ml-[5px] w-[82px] h-[23px] bg-[#e4e4e4] border border-[#c8c8c8] flex items-center justify-center gap-[4px]"><Copy size={14} strokeWidth={1.2} /><span><u>C</u>opy Level</span></span>
          <span className="ml-[4px] w-[2px] h-[24px] bg-[#555555]" />
          <span className="ml-[2px] w-[21px] h-[23px] bg-[#e4e4e4] border border-[#d0d0d0] flex items-center justify-center"><ChevronUp size={13} className="text-[#b8b8b8]" /></span>
          <span className="ml-[5px] w-[20px] h-[23px] bg-[#e4e4e4] border border-[#d0d0d0] flex items-center justify-center"><ChevronDown size={13} className="text-[#b8b8b8]" /></span>
          <span className="ml-[6px] w-[63px] h-[23px] bg-[#e4e4e4] border border-[#c8c8c8] flex items-center justify-center"><span><u>O</u>ptions...</span></span>
          <span className="ml-[41px] w-[12px] h-[12px] mt-[5px] border border-[#b8b8b8] bg-[#ededed] flex items-center justify-center"><Check size={10} className="text-[#a0a0a0]" /></span>
          <span className="ml-[4px] mt-[3px] text-[#8a8a8a] whitespace-nowrap">My data has headers</span>
        </div>
        <div className="ml-[12px] w-[539px] h-[155px] bg-white border border-[#a0a0a0] border-t-2 border-l-2 border-t-[#8a8a8a] border-l-[#8a8a8a] text-[12px]">
          <div className="h-[20px] flex leading-[20px] text-[#333333]">
            <span className="w-[180px] border-r border-[#e4e4e4]" />
            <span className="w-[182px] pl-[8px] border-r border-[#e4e4e4]">Sort On</span>
            <span className="pl-[5px]">Order</span>
          </div>
          <div className="h-[20px] bg-[#d5d8dc] flex items-center text-[#222222]">
            <span className="w-[126px]" />
            <span className="w-[26px] h-[18px] bg-[#1a85d6] border-y border-dotted border-white" />
            <span className="w-[15px] h-[18px] bg-[#e8e8e8] border border-[#9a9a9a] flex items-center justify-center"><ChevronDown size={10} /></span>
            <span className="ml-[19px] w-[167px] h-[18px] bg-white flex items-center justify-between pl-[3px] text-[11px]">Cell Values<span className="w-[15px] h-[18px] bg-[#e8e8e8] border border-[#9a9a9a] flex items-center justify-center"><ChevronDown size={10} /></span></span>
            <span className="ml-[15px] w-[160px] h-[18px] bg-white flex items-center justify-between pl-[3px] text-[11px]">A to Z<span className="w-[15px] h-[18px] bg-[#e8e8e8] border border-[#9a9a9a] flex items-center justify-center"><ChevronDown size={10} /></span></span>
          </div>
        </div>
        <div className="flex pt-[6px] pl-[400px] gap-[10px]">
          <span className="w-[68px] h-[20px] bg-[#e1e1e1] border border-[#cfcfcf] flex items-center justify-center">OK</span>
          <span className="w-[69px] h-[20px] bg-[#e1e1e1] border border-[#cfcfcf] flex items-center justify-center">Cancel</span>
        </div>
      </div>

      {/* hand cursor */}
      <svg className="absolute left-[524px] top-[408px]" width="15" height="17" viewBox="0 0 15 17" fill="#fff" stroke="#444"><path d="M5 1.5a1 1 0 012 0V7l5 1a2 2 0 011.5 2l-.5 4-1 2H6L2 10c0-1 1-1.5 2-.5l1 1z" /></svg>

      {/* callout */}
      <div className="absolute left-[320px] top-[304px] w-[178px] h-[79px] rounded-[8px] bg-gradient-to-b from-[#f6a84e] to-[#fde768] flex items-center justify-center text-center font-['Liberation_Sans',sans-serif] text-[12px] leading-[14px] text-[#333322]">
        <span className="absolute left-[84px] top-[-6px] w-0 h-0 border-x-[6px] border-x-transparent border-b-[6px] border-b-[#f6a84e]" />
        <span className="w-[140px] -mt-[2px]">In the Sort dialog box,<br />click the Add Level<br />button.</span>
      </div>
    </div>
  );
}
